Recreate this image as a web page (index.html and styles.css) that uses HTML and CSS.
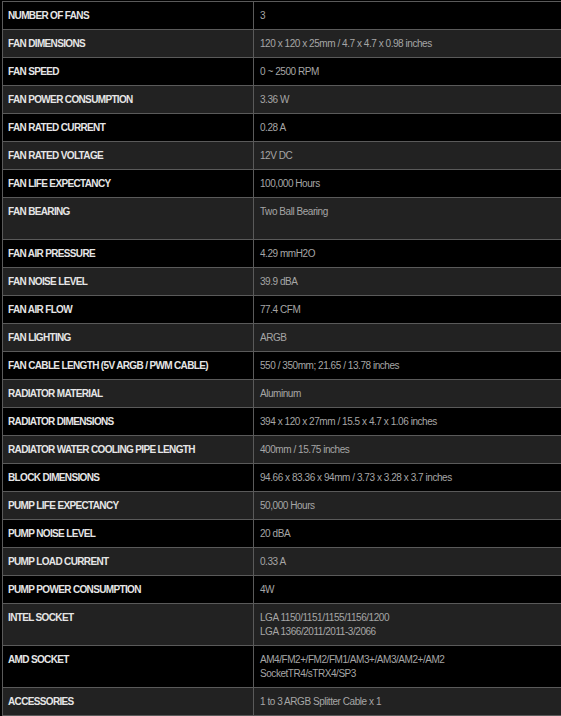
FILE: index.html
```html
<!DOCTYPE html>
<html>
<head>
<meta charset="utf-8">
<link rel="stylesheet" href="styles.css">
</head>
<body>
<table class="specs">
<colgroup><col class="c-label"><col class="c-value"></colgroup>
<tbody>
<tr><th>NUMBER OF FANS</th><td>3</td></tr>
<tr><th>FAN DIMENSIONS</th><td>120 x 120 x 25mm / 4.7 x 4.7 x 0.98 inches</td></tr>
<tr><th>FAN SPEED</th><td>0 ~ 2500 RPM</td></tr>
<tr><th>FAN POWER CONSUMPTION</th><td>3.36 W</td></tr>
<tr><th>FAN RATED CURRENT</th><td>0.28 A</td></tr>
<tr><th>FAN RATED VOLTAGE</th><td>12V DC</td></tr>
<tr><th>FAN LIFE EXPECTANCY</th><td>100,000 Hours</td></tr>
<tr><th>FAN BEARING</th><td>Two Ball Bearing<br>&nbsp;</td></tr>
<tr><th>FAN AIR PRESSURE</th><td>4.29 mmH2O</td></tr>
<tr><th>FAN NOISE LEVEL</th><td>39.9 dBA</td></tr>
<tr><th>FAN AIR FLOW</th><td>77.4 CFM</td></tr>
<tr><th>FAN LIGHTING</th><td>ARGB</td></tr>
<tr><th>FAN CABLE LENGTH (5V ARGB / PWM CABLE)</th><td>550 / 350mm; 21.65 / 13.78 inches</td></tr>
<tr><th>RADIATOR MATERIAL</th><td>Aluminum</td></tr>
<tr><th>RADIATOR DIMENSIONS</th><td>394 x 120 x 27mm / 15.5 x 4.7 x 1.06 inches</td></tr>
<tr><th>RADIATOR WATER COOLING PIPE LENGTH</th><td>400mm / 15.75 inches</td></tr>
<tr><th>BLOCK DIMENSIONS</th><td>94.66 x 83.36 x 94mm / 3.73 x 3.28 x 3.7 inches</td></tr>
<tr><th>PUMP LIFE EXPECTANCY</th><td>50,000 Hours</td></tr>
<tr><th>PUMP NOISE LEVEL</th><td>20 dBA</td></tr>
<tr><th>PUMP LOAD CURRENT</th><td>0.33 A</td></tr>
<tr><th>PUMP POWER CONSUMPTION</th><td>4W</td></tr>
<tr><th>INTEL SOCKET</th><td>LGA 1150/1151/1155/1156/1200<br>LGA 1366/2011/2011-3/2066</td></tr>
<tr><th>AMD SOCKET</th><td>AM4/FM2+/FM2/FM1/AM3+/AM3/AM2+/AM2<br>SocketTR4/sTRX4/SP3</td></tr>
<tr><th>ACCESSORIES</th><td>1 to 3 ARGB Splitter Cable x 1</td></tr>
</tbody>
</table>
</body>
</html>
```
FILE: styles.css
```css
html, body {
  margin: 0;
  padding: 0;
  background: #000;
  overflow: hidden;
}
body {
  padding: 1px 0 0 2px;
  font-family: "Liberation Sans", Arial, sans-serif;
  font-size: 10px;
  line-height: 14px;
}
.specs {
  border-collapse: collapse;
  table-layout: fixed;
  width: 559px;
}
.c-label { width: 251px; }
.c-value { width: 308px; }
.specs th,
.specs td {
  border: 1px solid #5a5a5a;
  padding: 7px 5px 6px 5px;
  vertical-align: top;
  text-align: left;
  white-space: nowrap;
}
.specs th {
  color: #e6e6e6;
  font-weight: bold;
  letter-spacing: -0.65px;
}
.specs td {
  color: #a6a6a6;
  font-weight: normal;
  letter-spacing: -0.45px;
  padding-left: 6px;
  border-right: 0;
}
.specs tr:nth-child(odd) { background: #000; }
.specs tr:nth-child(even) { background: #222; }
```
